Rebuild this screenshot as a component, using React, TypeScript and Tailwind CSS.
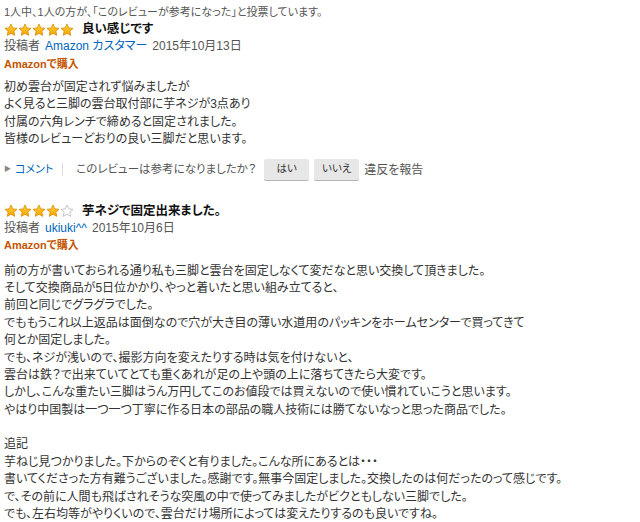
const FONT = "font-['Liberation_Sans','Noto_Sans_CJK_JP',sans-serif] [font-feature-settings:'palt']";

// ─── Star ─────────────────────────────────────────────────────────────────────
const Star = ({ filled }: { filled: boolean }) => (
  <svg width="14" height="14" viewBox="0 0 24 24" className="block">
    <defs>
      <linearGradient id="starFill" x1="0" y1="0" x2="0" y2="1">
        <stop offset="0%" stopColor="#ffd23f" />
        <stop offset="100%" stopColor="#f7a400" />
      </linearGradient>
    </defs>
    <path
      d="M12 1.8l3.1 6.6 7.2.8-5.4 4.9 1.5 7.1L12 17.6l-6.4 3.6 1.5-7.1L1.7 9.2l7.2-.8z"
      fill={filled ? 'url(#starFill)' : '#fff'}
      stroke={filled ? '#d88a00' : '#b8b8b8'}
      strokeWidth="1.4"
      strokeLinejoin="round"
    />
  </svg>
);

const Stars = ({ count }: { count: number }) => (
  <div className="flex items-center">
    {[0, 1, 2, 3, 4].map((i) => (
      <Star key={i} filled={i < count} />
    ))}
  </div>
);

// ─── Review ───────────────────────────────────────────────────────────────────
type ReviewProps = {
  rating: number;
  title: string;
  author: string;
  date: string;
  lines: string[];
  bodyGap: string;
  showActions?: boolean;
};

const Review = ({ rating, title, author, date, lines, bodyGap, showActions }: ReviewProps) => (
  <div>
    <div className="flex items-center h-[17px]">
      <Stars count={rating} />
      <span className="ml-[8px] text-[12.5px] font-bold text-[#111]">{title}</span>
    </div>
    <div className="h-[16px] flex items-center text-[12px] text-[#555]">
      <span>投稿者</span>
      <span className="ml-[5px] text-[#0066c0]">{author}</span>
      <span className="ml-[5px]">{date}</span>
    </div>
    <div className="mt-[2px] h-[16px] flex items-center text-[11px] font-bold text-[#c45500]">
      Amazonで購入
    </div>
    <div className={`${bodyGap} text-[12px] leading-[17.4px] text-[#333]`}>
      {lines.map((l, i) => (
        <div key={i} className="h-[17.4px] whitespace-nowrap">
          {l}
        </div>
      ))}
    </div>
    {showActions && (
      <div className="mt-[10px] h-[22px] flex items-center text-[11.5px] text-[#555]">
        <span className="text-[7px] text-[#888]">▶</span>
        <span className="ml-[4px] text-[11px] text-[#0066c0]">コメント</span>
        <span className="ml-[9px] w-px h-[13px] bg-[#ddd]" />
        <span className="ml-[13px]">このレビューは参考になりましたか？</span>
        <button className="ml-[8px] w-[45px] h-[22px] text-[10.5px] text-[#333] bg-[#e7e7e7] border-b border-[#b5b5b5] rounded-[2px]">
          はい
        </button>
        <button className="ml-[5px] w-[45px] h-[22px] text-[10.5px] text-[#333] bg-[#e7e7e7] border-b border-[#b5b5b5] rounded-[2px]">
          いいえ
        </button>
        <span className="ml-[5px] text-[12px]">違反を報告</span>
      </div>
    )}
  </div>
);

// ─── App ──────────────────────────────────────────────────────────────────────
export default function App() {
  return (
    <div className={`w-[640px] h-[522px] overflow-hidden bg-white px-[4px] pt-[3px] ${FONT}`}>
      <div className="h-[18px] flex items-center text-[11px] text-[#555]">
        1人中、1人の方が、「このレビューが参考になった」と投票しています。
      </div>

      <Review
        rating={5}
        title="良い感じです"
        author="Amazon カスタマー"
        date="2015年10月13日"
        bodyGap="mt-[7px]"
        showActions
        lines={[
          '初め雲台が固定されず悩みましたが',
          'よく見ると三脚の雲台取付部に芋ネジが3点あり',
          '付属の六角レンチで締めると固定されました。',
          '皆様のレビューどおりの良い三脚だと思います。',
        ]}
      />

      <div className="mt-[22px]">
        <Review
          rating={4}
          title="芋ネジで固定出来ました。"
          author="ukiuki^^"
          date="2015年10月6日"
          bodyGap="mt-[9px]"
          lines={[
            '前の方が書いておられる通り私も三脚と雲台を固定しなくて変だなと思い交換して頂きました。',
            'そして交換商品が5日位かかり、やっと着いたと思い組み立てると、',
            '前回と同じでグラグラでした。',
            'でももうこれ以上返品は面倒なので穴が大き目の薄い水道用のパッキンをホームセンターで買ってきて',
            '何とか固定しました。',
            'でも、ネジが浅いので、撮影方向を変えたりする時は気を付けないと、',
            '雲台は鉄？で出来ていてとても重くあれが足の上や頭の上に落ちてきたら大変です。',
            'しかし、こんな重たい三脚はうん万円してこのお値段では買えないので使い慣れていこうと思います。',
            'やはり中国製は一つ一つ丁寧に作る日本の部品の職人技術には勝てないなっと思った商品でした。',
            '',
            '追記',
            '芋ねじ見つかりました。下からのぞくと有りました。こんな所にあるとは・・・',
            '書いてくださった方有難うございました。感謝です。無事今固定しました。交換したのは何だったのって感じです。',
            'で、その前に人間も飛ばされそうな突風の中で使ってみましたがビクともしない三脚でした。',
            'でも、左右均等がやりくいので、雲台だけ場所によっては変えたりするのも良いですね。',
          ]}
        />
      </div>
    </div>
  );
}
